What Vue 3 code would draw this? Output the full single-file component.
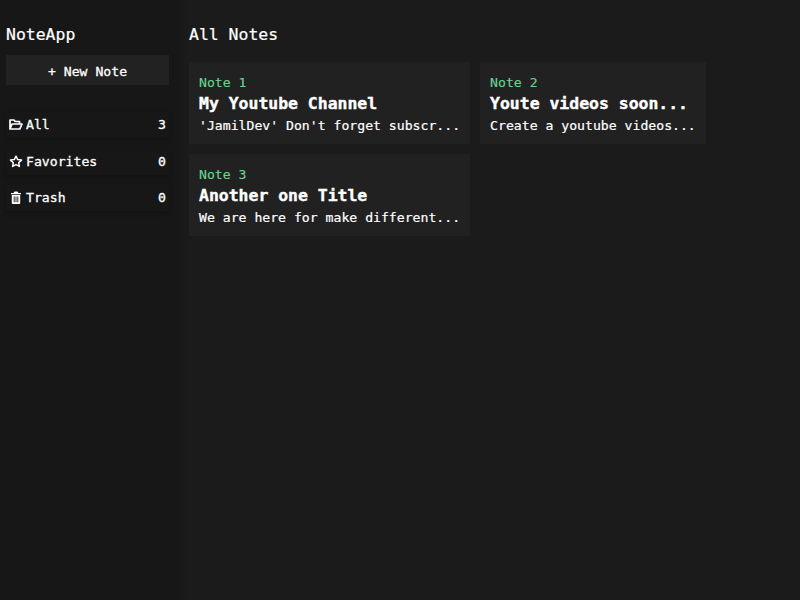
<script setup>
const navItems = [
  { label: 'All', count: 3, icon: 'folder' },
  { label: 'Favorites', count: 0, icon: 'star' },
  { label: 'Trash', count: 0, icon: 'trash' },
]
const notes = [
  { tag: 'Note 1', title: 'My Youtube Channel', body: "'JamilDev' Don't forget subscr..." },
  { tag: 'Note 2', title: 'Youte videos soon...', body: 'Create a youtube videos...' },
  { tag: 'Note 3', title: 'Another one Title', body: 'We are here for make different...' },
]
</script>

<template>
  <div class="app">
    <aside class="sidebar">
      <h1 class="logo">NoteApp</h1>
      <button class="new-note">+ New Note</button>
      <ul class="nav">
        <li v-for="item in navItems" :key="item.label" class="nav-item">
          <span class="nav-label">
            <svg v-if="item.icon === 'folder'" class="icon" viewBox="0 0 14 13" fill="none" stroke="currentColor" stroke-width="1.7" stroke-linejoin="round">
              <path d="M1 11V2h4l1.2 1.5h4.3v2M1 11l2-5h10l-2.2 5z" />
            </svg>
            <svg v-else-if="item.icon === 'star'" class="icon" viewBox="0 0 14 13" fill="none" stroke="currentColor" stroke-width="1.5" stroke-linejoin="round">
              <path d="M7 1.2l1.7 3.4 3.8.5-2.8 2.6.7 3.7L7 9.6l-3.4 1.8.7-3.7L1.5 5.1l3.8-.5z" />
            </svg>
            <svg v-else class="icon" viewBox="0 0 14 13" fill="currentColor" fill-rule="evenodd">
              <path d="M2 2h2.6l.8-1.5h3.2L9.4 2H12v1.3H2zM2.8 4h8.4v8.2q0 .8-.8.8H3.600q-.8 0-.8-.8zM4.700 5.500v5.800h.9V5.500zM6.550 5.500v5.800h.9V5.500zM8.400 5.500v5.800h.9V5.500z" />
            </svg>
            {{ item.label }}
          </span>
          <span class="count">{{ item.count }}</span>
        </li>
      </ul>
    </aside>
    <main class="main">
      <h2 class="heading">All Notes</h2>
      <div class="notes">
        <article v-for="note in notes" :key="note.tag" class="card">
          <div class="tag">{{ note.tag }}</div>
          <h3 class="title">{{ note.title }}</h3>
          <p class="body">{{ note.body }}</p>
        </article>
      </div>
    </main>
  </div>
</template>

<style>
html, body { margin: 0; background: #1b1b1b; }
</style>

<style scoped>
.app {
  display: flex;
  height: 600px;
  width: 800px;
  overflow: hidden;
  font-family: "DejaVu Sans Mono", monospace;
  color: #fff;
  background: #1b1b1b;
}
.sidebar {
  width: 163px;
  padding: 0 10px 0 6px;
  flex-shrink: 0;
  background: #171717;
  box-shadow: 2px 0 6px rgba(0, 0, 0, 0.1);
}
.logo {
  margin: 0;
  padding-top: 25px;
  font-size: 16.45px;
  line-height: 20px;
  font-weight: 400;
  -webkit-text-stroke: 0.2px #fff;
}
.new-note {
  display: block;
  width: 100%;
  height: 30px;
  margin-top: 10px;
  padding: 3px 0 0;
  border: 0;
  background: #222;
  color: #fff;
  font: inherit;
  font-size: 13.15px;
  -webkit-text-stroke: 0.3px #fff;
}
.nav {
  list-style: none;
  margin: 27px 0 0;
  padding: 0;
  display: flex;
  flex-direction: column;
  gap: 10.5px;
}
.nav-item {
  display: flex;
  justify-content: space-between;
  align-items: center;
  box-sizing: border-box;
  height: 26px;
  padding: 0 3px 1px;
  font-size: 13.15px;
  -webkit-text-stroke: 0.3px #fff;
  background: #171717;
  box-shadow: 0 2px 4px rgba(0, 0, 0, 0.25);
}
.nav-label {
  display: flex;
  align-items: center;
  gap: 3px;
}
.icon {
  width: 14px;
  height: 13px;
}
.main {
  flex: 1;
  padding: 25px 0 0 10px;
}
.heading {
  margin: 0;
  font-size: 16.45px;
  line-height: 20px;
  font-weight: 400;
  -webkit-text-stroke: 0.2px #fff;
}
.notes {
  display: flex;
  flex-wrap: wrap;
  gap: 10px;
  margin-top: 17px;
  width: 600px;
}
.card {
  box-sizing: border-box;
  height: 82px;
  padding: 13px 10px 0;
  background: #212121;
}
.tag {
  font-size: 13.15px;
  line-height: 16px;
  color: #68d391;
  -webkit-text-stroke: 0.15px #68d391;
}
.title {
  margin: 3px 0 0;
  font-size: 16.45px;
  line-height: 20px;
  font-weight: 700;
  -webkit-text-stroke: 0.4px #fff;
}
.body {
  margin: 4px 0 0;
  font-size: 13.15px;
  line-height: 16px;
  white-space: nowrap;
  -webkit-text-stroke: 0.2px #fff;
}
</style>
